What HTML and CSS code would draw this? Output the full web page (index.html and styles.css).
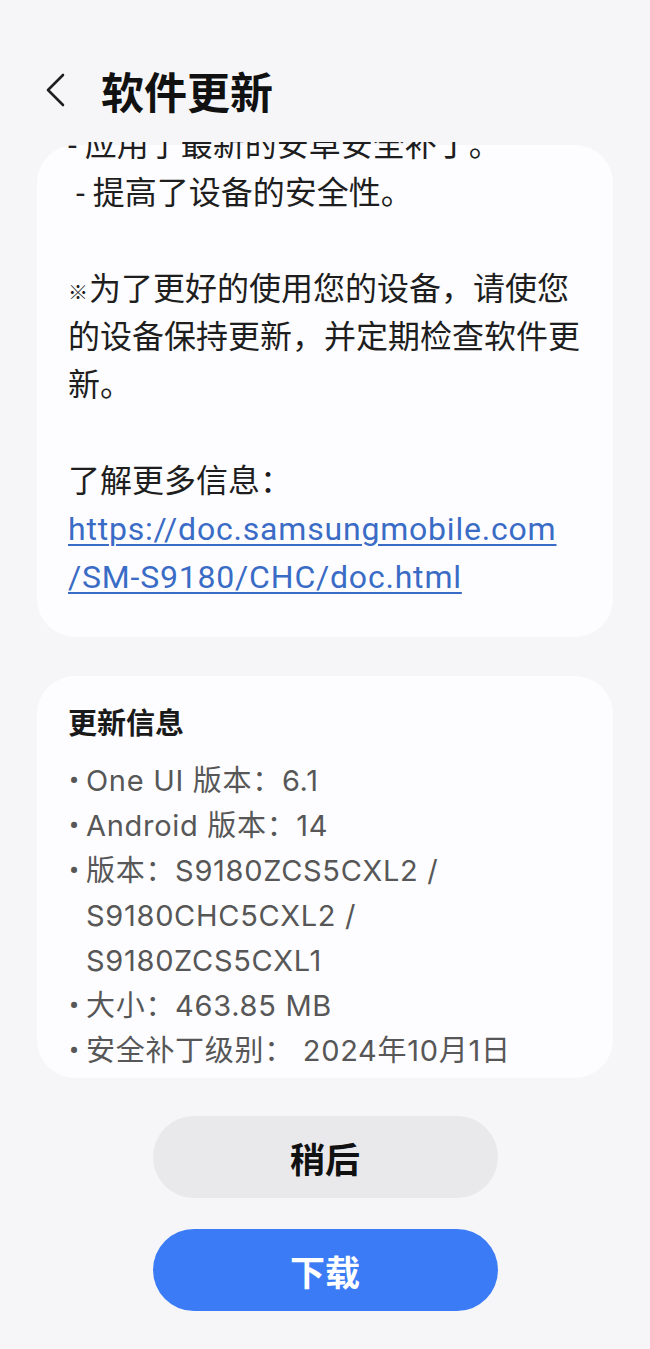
FILE: index.html
```html
<!DOCTYPE html>
<html lang="zh-CN">
<head>
<meta charset="utf-8">
<title>软件更新</title>
<link rel="stylesheet" href="styles.css">
</head>
<body>
<div class="screen">
  <header class="header">
    <svg class="back" width="28" height="36" viewBox="0 0 28 36" aria-hidden="true">
      <polyline points="23,3 8,18 23,33" fill="none" stroke="#1f1f1f" stroke-width="2.6" stroke-linecap="round" stroke-linejoin="round"/>
    </svg>
    <h1 class="title">软件更新</h1>
  </header>

  <main class="scroll">
    <section class="card notes">
      <div class="notes-body">
        <p class="para">- 应用了最新的安卓安全补丁。<br>&nbsp;- 提高了设备的安全性。</p>
        <p class="para"><span class="mark">※</span>为了更好的使用您的设备，请使您的设备保持更新，并定期检查软件更新。</p>
        <p class="para">了解更多信息：<br><a class="link" href="#">https://doc.samsungmobile.com<br>/SM-S9180/CHC/doc.html</a></p>
      </div>
    </section>

    <section class="card info">
      <h2 class="info-title">更新信息</h2>
      <ul class="info-list">
        <li class="item"><span class="dot">•</span><span class="val">One UI 版本：6.1</span></li>
        <li class="item"><span class="dot">•</span><span class="val">Android 版本：14</span></li>
        <li class="item"><span class="dot">•</span><span class="val">版本：S9180ZCS5CXL2 /<br>S9180CHC5CXL2 /<br>S9180ZCS5CXL1</span></li>
        <li class="item"><span class="dot">•</span><span class="val">大小：463.85 MB</span></li>
        <li class="item"><span class="dot">•</span><span class="val">安全补丁级别： 2024年10月1日</span></li>
      </ul>
    </section>
  </main>

  <div class="actions">
    <button class="btn btn-later">稍后</button>
    <button class="btn btn-download">下载</button>
  </div>
</div>
</body>
</html>
```

FILE: styles.css
```css
* {
  box-sizing: border-box;
}

html, body {
  margin: 0;
  padding: 0;
}

body {
  background: #f6f6f9;
  font-family: Roboto, "Noto Sans CJK SC", "Noto Sans", sans-serif;
  color: #1c1c1c;
  width: 650px;
  height: 1349px;
  overflow: hidden;
}

.screen {
  display: flex;
  flex-direction: column;
}

.header {
  display: flex;
  align-items: center;
  height: 60px;
  margin-top: 60px;
  margin-bottom: 22px;
  padding-left: 40px;
}

.back {
  display: block;
  flex: none;
}

.title {
  margin: 0 0 0 33px;
  font-family: "Noto Sans CJK SC", sans-serif;
  font-size: 43px;
  font-weight: 700;
  line-height: 60px;
  color: #111;
}

.scroll {
  overflow: hidden;
  display: flex;
  flex-direction: column;
  gap: 39px;
  padding: 3px 37px 0 37px;
}

.card {
  background: #fdfdff;
  border-radius: 38px;
}

.notes {
  padding: 0 26px 36px 31px;
}

.notes-body {
  margin-top: -24px;
  font-size: 32px;
  line-height: 48px;
  color: #1e1e1e;
}

.para {
  margin: 0 0 48px 0;
}

.para:last-child {
  margin-bottom: 0;
}

.mark {
  font-size: 20px;
  line-height: 20px;
  margin-right: 1px;
}

.link {
  font-family: Roboto, sans-serif;
  color: #3a6cc6;
  text-decoration: underline;
  text-decoration-thickness: 2px;
  text-underline-offset: 4px;
  letter-spacing: 0.8px;
}

.info {
  padding: 28px 26px 5px 31px;
}

.info-title {
  margin: 0 0 20px 0;
  font-family: "Noto Sans CJK SC", sans-serif;
  font-size: 29px;
  font-weight: 700;
  line-height: 34px;
  color: #1a1a1a;
}

.info-list {
  list-style: none;
  margin: 0;
  padding: 0;
  font-family: Inter, "Noto Sans CJK SC", sans-serif;
  font-size: 29px;
  line-height: 45px;
  letter-spacing: 0.7px;
  color: #575757;
}

.item {
  display: flex;
}

.dot {
  flex: none;
  width: 18px;
  padding-left: 1px;
  font-family: Roboto, sans-serif;
  font-size: 30px;
  letter-spacing: 0;
}

.val {
  flex: 1;
}

.actions {
  display: flex;
  flex-direction: column;
  align-items: center;
  gap: 31px;
  margin-top: 38px;
}

.btn {
  width: 345px;
  height: 82px;
  border: none;
  border-radius: 41px;
  font-family: "Noto Sans CJK SC", sans-serif;
  font-size: 35px;
  font-weight: 700;
  padding: 0;
}

.btn-later {
  background: #e9e9ec;
  color: #111;
}

.btn-download {
  background: #3b7bf6;
  color: #fff;
}
```
